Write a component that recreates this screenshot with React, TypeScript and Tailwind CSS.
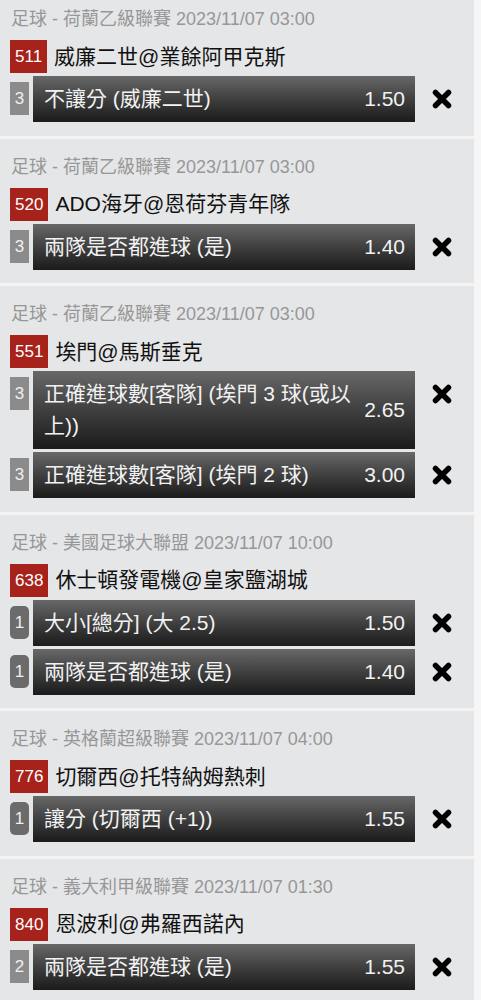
import React from 'react'

type Leg = { count: string; round?: boolean; label: string; odds: string }
type Match = { league: string; time: string; code: string; teams: string; legs: Leg[] }

const matches: Match[] = [
  {
    league: '足球 - 荷蘭乙級聯賽',
    time: '2023/11/07 03:00',
    code: '511',
    teams: '威廉二世@業餘阿甲克斯',
    legs: [{ count: '3', label: '不讓分 (威廉二世)', odds: '1.50' }],
  },
  {
    league: '足球 - 荷蘭乙級聯賽',
    time: '2023/11/07 03:00',
    code: '520',
    teams: 'ADO海牙@恩荷芬青年隊',
    legs: [{ count: '3', label: '兩隊是否都進球 (是)', odds: '1.40' }],
  },
  {
    league: '足球 - 荷蘭乙級聯賽',
    time: '2023/11/07 03:00',
    code: '551',
    teams: '埃門@馬斯垂克',
    legs: [
      { count: '3', label: '正確進球數[客隊] (埃門 3 球(或以上))', odds: '2.65' },
      { count: '3', label: '正確進球數[客隊] (埃門 2 球)', odds: '3.00' },
    ],
  },
  {
    league: '足球 - 美國足球大聯盟',
    time: '2023/11/07 10:00',
    code: '638',
    teams: '休士頓發電機@皇家鹽湖城',
    legs: [
      { count: '1', round: true, label: '大小[總分] (大 2.5)', odds: '1.50' },
      { count: '1', round: true, label: '兩隊是否都進球 (是)', odds: '1.40' },
    ],
  },
  {
    league: '足球 - 英格蘭超級聯賽',
    time: '2023/11/07 04:00',
    code: '776',
    teams: '切爾西@托特納姆熱刺',
    legs: [{ count: '1', round: true, label: '讓分 (切爾西 (+1))', odds: '1.55' }],
  },
  {
    league: '足球 - 義大利甲級聯賽',
    time: '2023/11/07 01:30',
    code: '840',
    teams: '恩波利@弗羅西諾內',
    legs: [{ count: '2', label: '兩隊是否都進球 (是)', odds: '1.55' }],
  },
]

function RemoveIcon() {
  return (
    <svg width="20" height="20" viewBox="0 0 20 20" className="block">
      <path d="M3.5 3.5 L16.5 16.5 M16.5 3.5 L3.5 16.5" stroke="#000" strokeWidth="5.5" strokeLinecap="round" />
    </svg>
  )
}

function LegRow({ leg }: { leg: Leg }) {
  return (
    <div className="flex items-start">
      <div
        className={
          'mt-[6px] w-[19px] h-[33px] shrink-0 text-center leading-[33px] text-[17px] text-[#f0f0f0] ' +
          (leg.round ? 'bg-[#6b6b6b] rounded-[5px]' : 'bg-[#8b8b8b]')
        }
      >
        {leg.count}
      </div>
      <div className="ml-[4px] w-[382px] flex items-center bg-linear-to-b from-[#686868] to-[#1b1b1b] pl-[11px] pr-[10px] py-[7px] text-[21px] leading-[32px] text-[#f2f2f2]">
        <div className="flex-1">{leg.label}</div>
        <div className="ml-[8px] shrink-0">{leg.odds}</div>
      </div>
      <div className="h-[46px] flex items-center ml-[17px]">
        <RemoveIcon />
      </div>
    </div>
  )
}

export default function App() {
  return (
    <div
      className="min-h-screen bg-[#f6f6f6] overflow-hidden"
      style={{ fontFamily: '"Liberation Sans", "Noto Sans CJK TC", sans-serif' }}
    >
      <div className="w-[474px] mt-[-9px]">
        {matches.map((m, i) => (
          <div key={i} className="bg-[#e5e6e8] border-b-[3px] border-[#f4f4f4] pt-[18px] pb-[13.5px] pl-[10px]">
            <div className="pl-[1px] text-[18px] leading-[20px] text-[#979797]">
              {m.league} {m.time}
            </div>
            <div className="mt-[11px] flex items-center">
              <div className="h-[33px] px-[5px] bg-[#a6221b] text-white text-[17px] leading-[33px]">{m.code}</div>
              <div className="ml-[7px] text-[21px] text-[#111]">{m.teams}</div>
            </div>
            <div className="mt-[3px] flex flex-col gap-[3px]">
              {m.legs.map((leg, j) => (
                <LegRow key={j} leg={leg} />
              ))}
            </div>
          </div>
        ))}
      </div>
    </div>
  )
}
